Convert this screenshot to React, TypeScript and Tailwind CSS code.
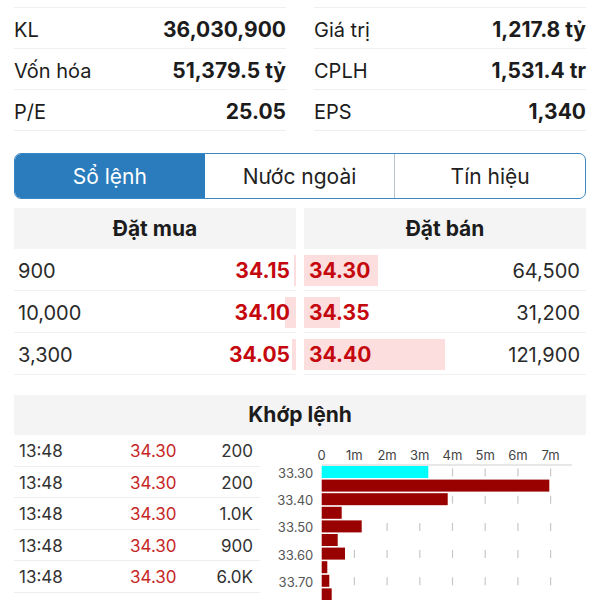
import React from "react";

const leftStats = [
  ["KL", "36,030,900"],
  ["Vốn hóa", "51,379.5 tỷ"],
  ["P/E", "25.05"],
];
const rightStats = [
  ["Giá trị", "1,217.8 tỷ"],
  ["CPLH", "1,531.4 tr"],
  ["EPS", "1,340"],
];

const buys = [
  { vol: "900", price: "34.15", w: 2 },
  { vol: "10,000", price: "34.10", w: 11 },
  { vol: "3,300", price: "34.05", w: 4 },
];
const sells = [
  { vol: "64,500", price: "34.30", w: 74 },
  { vol: "31,200", price: "34.35", w: 36 },
  { vol: "121,900", price: "34.40", w: 141 },
];

const matches = [
  ["13:48", "34.30", "200"],
  ["13:48", "34.30", "200"],
  ["13:48", "34.30", "1.0K"],
  ["13:48", "34.30", "900"],
  ["13:48", "34.30", "6.0K"],
];

function StatCol({ rows }: { rows: string[][] }) {
  return (
    <div className="border-t border-[#efefef]">
      {rows.map(([k, v]) => (
        <div
          key={k}
          className="h-[41px] pt-[3px] flex items-center justify-between border-b border-[#efefef] text-[#1c1c1c]"
        >
          <span className="text-[20px]">{k}</span>
          <span className="text-[21px] font-bold">{v}</span>
        </div>
      ))}
    </div>
  );
}

function Chart() {
  const x0 = 61.7;
  const step = 32.7;
  const bars = [106.6, 227.6, 126, 20, 40, 16, 23.3, 5.6, 7.6, 10, 8];
  const labels = ["33.30", "33.40", "33.50", "33.60", "33.70"];
  const ticks = ["0", "1m", "2m", "3m", "4m", "5m", "6m", "7m"];
  return (
    <svg width="326" height="170" viewBox="0 0 326 170" className="block">
      {ticks.map((t, i) => (
        <text
          key={t}
          x={x0 + i * step}
          y={24.5}
          textAnchor="middle"
          fontSize="13"
          fill="#444"
          fontFamily="Inter, sans-serif"
        >
          {t}
        </text>
      ))}
      {[0, 1, 2, 3, 4, 5].map((r) =>
        ticks.slice(1).map((_, i) => (
          <line
            key={r + "-" + i}
            x1={x0 + (i + 1) * step}
            x2={x0 + (i + 1) * step}
            y1={37.5 + r * 27.2 - 4}
            y2={37.5 + r * 27.2 + 4}
            stroke="#c8c8c8"
            strokeWidth="1.2"
          />
        ))
      )}
      <line x1={x0} x2={312} y1={30} y2={30} stroke="#cfcfcf" strokeWidth="1" />
      {bars.map((w, i) => (
        <rect
          key={i}
          x={x0}
          y={31 + i * 13.6}
          width={w}
          height={12}
          fill={i === 0 ? "#00ffff" : "#990000"}
        />
      ))}
      {labels.map((l, r) => (
        <text
          key={l}
          x={53.3}
          y={38.5 + r * 27.2 + 4.5}
          textAnchor="end"
          fontSize="13"
          fill="#555"
          fontFamily="Inter, sans-serif"
        >
          {l}
        </text>
      ))}
    </svg>
  );
}

export default function App() {
  return (
    <div className="w-[600px] h-[600px] overflow-hidden bg-white px-[14px] font-['Inter',sans-serif] text-[#1c1c1c]">
      <div className="grid grid-cols-2 gap-x-[28px] pt-[7px]">
        <StatCol rows={leftStats} />
        <StatCol rows={rightStats} />
      </div>

      <div className="mt-[22px] h-[46px] flex rounded-[7px] border border-[#3a88c5] overflow-hidden text-[21px]">
        <div className="flex-1 flex items-center justify-center bg-[#2b7cbc] text-white pt-[1px]">Sổ lệnh</div>
        <div className="flex-1 flex items-center justify-center text-[#222] pt-[1px]">Nước ngoài</div>
        <div className="flex-1 flex items-center justify-center text-[#222] border-l border-[#b9c6d0] pt-[1px]">Tín hiệu</div>
      </div>

      <div className="mt-[9px] grid grid-cols-2 gap-x-[8px]">
        <div>
          <div className="h-[41px] bg-[#f4f4f4] flex items-center justify-center font-bold text-[21px]">Đặt mua</div>
          {buys.map((b) => (
            <div
              key={b.price}
              className="relative h-[42px] pt-[3px] flex items-center justify-between border-b border-[#f0f0f0] pl-[4px] pr-[6px]"
            >
              <div className="absolute right-0 top-[6px] h-[31px] bg-[#fcdede]" style={{ width: b.w }} />
              <span className="relative text-[20px] text-[#2a2a2a]">{b.vol}</span>
              <span className="relative text-[21px] font-bold text-[#c4080e]">{b.price}</span>
            </div>
          ))}
        </div>
        <div>
          <div className="h-[41px] bg-[#f4f4f4] flex items-center justify-center font-bold text-[21px]">Đặt bán</div>
          {sells.map((s) => (
            <div
              key={s.price}
              className="relative h-[42px] pt-[3px] flex items-center justify-between border-b border-[#f0f0f0] pl-[5px] pr-[6px]"
            >
              <div className="absolute left-0 top-[6px] h-[31px] bg-[#fcdede]" style={{ width: s.w }} />
              <span className="relative text-[21px] font-bold text-[#c4080e]">{s.price}</span>
              <span className="relative text-[20px] text-[#2a2a2a]">{s.vol}</span>
            </div>
          ))}
        </div>
      </div>

      <div className="mt-[20px] h-[40px] bg-[#f4f4f4] flex items-center justify-center font-bold text-[21px]">Khớp lệnh</div>

      <div className="flex">
        <div className="w-[246px]">
          {matches.map((m, i) => (
            <div
              key={i}
              className="h-[31.6px] pt-[3px] grid grid-cols-[116px_1fr_auto] items-center border-b border-[#eeeeee] text-[17px] pr-[7px]"
            >
              <span className="pl-[5px] text-[#333]">{m[0]}</span>
              <span className="text-[#c62828]">{m[1]}</span>
              <span className="text-[#333]">{m[2]}</span>
            </div>
          ))}
        </div>
        <Chart />
      </div>
    </div>
  );
}
